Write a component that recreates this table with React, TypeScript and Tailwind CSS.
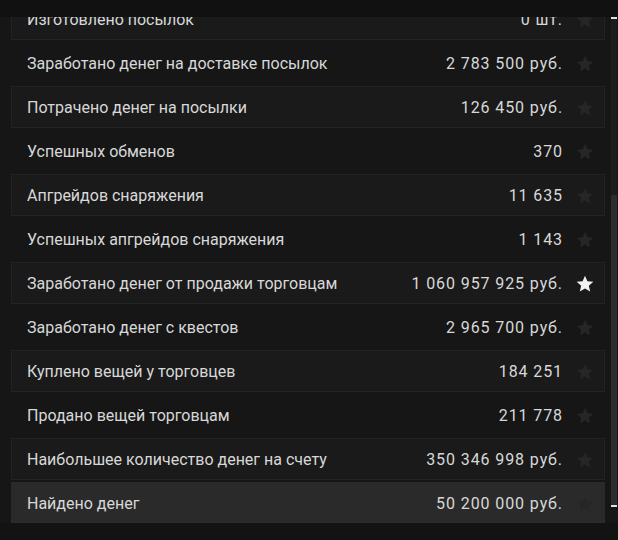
import React from 'react'

type Stat = { label: string; value: string; starred?: boolean }

const stats: Stat[] = [
  { label: 'Изготовлено посылок', value: '0 шт.' },
  { label: 'Заработано денег на доставке посылок', value: '2 783 500 руб.' },
  { label: 'Потрачено денег на посылки', value: '126 450 руб.' },
  { label: 'Успешных обменов', value: '370' },
  { label: 'Апгрейдов снаряжения', value: '11 635' },
  { label: 'Успешных апгрейдов снаряжения', value: '1 143' },
  { label: 'Заработано денег от продажи торговцам', value: '1 060 957 925 руб.', starred: true },
  { label: 'Заработано денег с квестов', value: '2 965 700 руб.' },
  { label: 'Куплено вещей у торговцев', value: '184 251' },
  { label: 'Продано вещей торговцам', value: '211 778' },
  { label: 'Наибольшее количество денег на счету', value: '350 346 998 руб.' },
  { label: 'Найдено денег', value: '50 200 000 руб.' },
]

const Star = ({ active }: { active?: boolean }) => (
  <svg viewBox="0 0 24 24" className={active ? 'size-[20px] fill-[#f2f2f2]' : 'size-[20px] fill-[#262626]'}>
    <path d="M12 2.2l2.9 6.6 7.1.6-5.4 4.7 1.6 7-6.2-3.7-6.2 3.7 1.6-7L2 9.4l7.1-.6z" />
  </svg>
)

export default function App() {
  return (
    <div className="flex h-[540px] w-[618px] flex-col overflow-hidden bg-[#161616] font-['Roboto',sans-serif] text-[16px] text-[#d8d8d8]">
      <div className="h-[17px] shrink-0 bg-[#111111]" />
      <div className="flex min-h-0 flex-1">
        <div className="h-[506px] flex-1 overflow-hidden pl-[11px]">
          <div className="-mt-[19px] flex flex-col gap-[2px]">
            {stats.map((s, i) => {
              const last = i === stats.length - 1
              return (
                <div
                  key={s.label}
                  className={
                    'flex h-[42px] items-center border pl-[15px] pr-[9px] pt-[1px] ' +
                    (last
                      ? 'border-transparent bg-[#2a2a2a]'
                      : i % 2 === 0
                        ? 'border-[#232323] bg-[#1a1a1a]'
                        : 'border-transparent')
                  }
                >
                  <span className="min-w-0 flex-1 truncate">{s.label}</span>
                  <span className="tracking-[0.9px]">{s.value}</span>
                  <span className="ml-[12px] flex w-[20px] justify-center">
                    <Star active={s.starred} />
                  </span>
                </div>
              )
            })}
          </div>
        </div>
        <div className="ml-[6px] mr-[1px] flex h-[490px] w-[6px] flex-col bg-[#1c1c1c]">
          <div className="h-[2px] bg-[#e0e0e0]" />
          <div className="flex-1" />
          <div className="h-[310px] bg-[#2c2c2c]" />
          <div className="h-[2px] bg-[#e0e0e0]" />
        </div>
      </div>
      <div className="h-[17px] shrink-0 bg-[#131313]" />
    </div>
  )
}
